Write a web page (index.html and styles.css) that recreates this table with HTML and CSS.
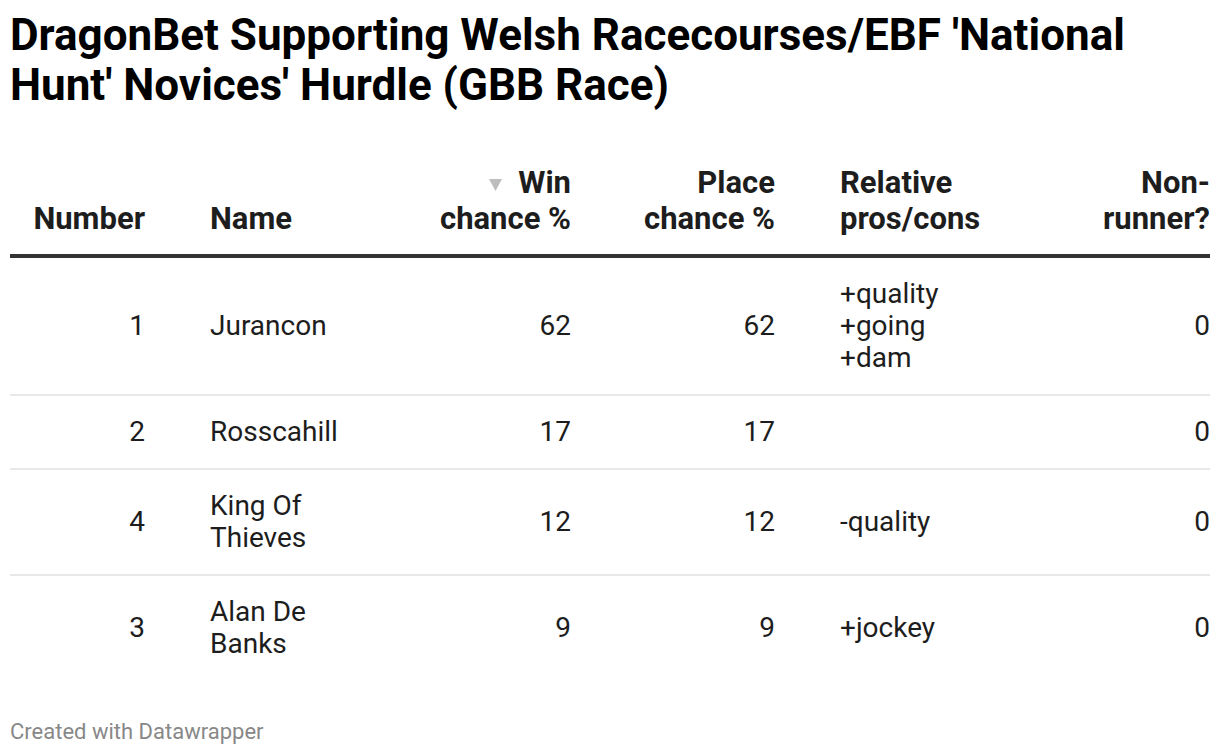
FILE: index.html
```html
<!DOCTYPE html>
<html lang="en">
<head>
<meta charset="utf-8">
<title>DragonBet table</title>
<link rel="stylesheet" href="styles.css">
</head>
<body>
<div class="chart">
  <h1 class="title">DragonBet Supporting Welsh Racecourses/EBF 'National Hunt' Novices' Hurdle (GBB Race)</h1>
  <table class="tbl">
    <colgroup>
      <col class="c1"><col class="c2"><col class="c3"><col class="c4"><col class="c5"><col class="c6">
    </colgroup>
    <thead>
      <tr>
        <th class="num">Number</th>
        <th class="txt pl65">Name</th>
        <th class="num pl60"><svg class="sort" width="13" height="12" viewBox="0 0 13 12" aria-hidden="true"><polygon points="0,0 13,0 6.5,12" fill="#bdbdbd"/></svg>Win chance %</th>
        <th class="num pl60">Place chance %</th>
        <th class="txt pl65">Relative pros/cons</th>
        <th class="num pl90">Non-runner?</th>
      </tr>
    </thead>
    <tbody>
      <tr>
        <td class="num">1</td>
        <td class="txt pl65">Jurancon</td>
        <td class="num pl60">62</td>
        <td class="num pl60">62</td>
        <td class="txt pl65">+quality<br>+going<br>+dam</td>
        <td class="num pl90">0</td>
      </tr>
      <tr>
        <td class="num">2</td>
        <td class="txt pl65">Rosscahill</td>
        <td class="num pl60">17</td>
        <td class="num pl60">17</td>
        <td class="txt pl65"></td>
        <td class="num pl90">0</td>
      </tr>
      <tr>
        <td class="num">4</td>
        <td class="txt pl65">King Of Thieves</td>
        <td class="num pl60">12</td>
        <td class="num pl60">12</td>
        <td class="txt pl65">-quality</td>
        <td class="num pl90">0</td>
      </tr>
      <tr>
        <td class="num">3</td>
        <td class="txt pl65">Alan De Banks</td>
        <td class="num pl60">9</td>
        <td class="num pl60">9</td>
        <td class="txt pl65">+jockey</td>
        <td class="num pl90">0</td>
      </tr>
    </tbody>
  </table>
  <div class="footer">Created with Datawrapper</div>
</div>
</body>
</html>
```
FILE: styles.css
```css
html, body {
  margin: 0;
  padding: 0;
  background: #fff;
}
body {
  font-family: Roboto, "Liberation Sans", Arial, sans-serif;
  color: #1d1d1d;
}
.chart {
  padding: 10px 10px 0 10px;
  width: 1200px;
}
.title {
  margin: 0;
  font-size: 44px;
  line-height: 50px;
  font-weight: 700;
  color: #000;
}
.tbl {
  margin-top: 55px;
  width: 1200px;
  border-collapse: collapse;
  table-layout: fixed;
}
.c1 { width: 135px; }
.c2 { width: 215px; }
.c3 { width: 211px; }
.c4 { width: 204px; }
.c5 { width: 215px; }
.c6 { width: 220px; }
.tbl th {
  font-size: 31px;
  line-height: 36px;
  font-weight: 700;
  color: #1d1d1d;
  vertical-align: bottom;
  padding: 0 0 17px 0;
  border-bottom: 4px solid #333;
}
.tbl td {
  font-size: 28px;
  line-height: 32px;
  font-weight: 400;
  color: #1d1d1d;
  vertical-align: middle;
  padding: 20px 0;
  border-bottom: 2px solid #e8e8e8;
}
.tbl tbody tr:last-child td {
  border-bottom: none;
}
.num { text-align: right; }
.txt { text-align: left; }
.tbl .pl60 { padding-left: 60px; }
.tbl .pl65 { padding-left: 65px; }
.tbl .pl90 { padding-left: 90px; }
.sort {
  display: inline-block;
  vertical-align: 2px;
  margin-right: 16px;
}
.footer {
  margin-top: 40px;
  font-size: 22px;
  line-height: 24px;
  color: #888;
}
```
